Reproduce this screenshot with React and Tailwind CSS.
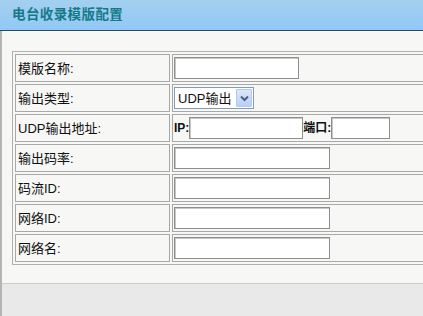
import React from "react";

const font = { fontFamily: '"Liberation Sans", "Noto Sans CJK SC", sans-serif' };

function Row({ label, children }) {
  return (
    <tr>
      <td className="w-[155px] h-[28px] border border-[#a8a8a8] pl-[2px] text-[13px] text-[#111] align-middle leading-none">
        {label}
      </td>
      <td className="h-[28px] border border-[#a8a8a8] pl-[1px] align-middle">{children}</td>
    </tr>
  );
}

function Input({ w }) {
  return (
    <div
      className={`${w} h-[22px] bg-white border border-[#8e8e8e] shadow-[inset_1px_1px_0_#c8c8c8]`}
    />
  );
}

export default function App() {
  return (
    <div className="w-[423px] h-[316px] overflow-hidden bg-[#f7f7f6] flex flex-col" style={font}>
      <div className="h-[31px] shrink-0 bg-gradient-to-b from-[#a3d0ee] to-[#92c8f8] border-b border-[#2a4d5a] flex items-center pl-[12px]">
        <span className="text-[13.5px] font-bold text-[#137a86] tracking-[0.4px] leading-none">电台收录模版配置</span>
      </div>
      <div className="flex-1 flex flex-col border-l-2 border-[#b4b4b4]">
        <div className="h-[252px] shrink-0 pt-[20px] pl-[10px]">
          <table className="w-[440px] border-separate border-spacing-[2px] border border-[#b0b0b0]">
            <tbody>
              <Row label="模版名称:">
                <Input w="w-[125px]" />
              </Row>
              <Row label="输出类型:">
                <div className="w-[80px] h-[22px] bg-white border border-[#7f9db9] flex items-center justify-between pl-[3px] pr-[1px]">
                  <span className="text-[13px] text-[#111] leading-none">UDP输出</span>
                  <span className="w-[16px] h-[18px] bg-gradient-to-b from-[#dbe7fb] to-[#b9cff5] border border-[#b4c8ef] flex items-center justify-center rounded-[1px]">
                    <svg width="9" height="7" viewBox="0 0 9 7">
                      <path d="M1 1.5 L4.5 5 L8 1.5" stroke="#4d6185" strokeWidth="2" fill="none" />
                    </svg>
                  </span>
                </div>
              </Row>
              <Row label="UDP输出地址:">
                <div className="flex items-center">
                  <span className="text-[12px] font-bold text-[#111] leading-none">IP:</span>
                  <Input w="w-[114px]" />
                  <span className="text-[12px] font-bold text-[#111] leading-none">端口:</span>
                  <Input w="w-[59px]" />
                </div>
              </Row>
              <Row label="输出码率:">
                <Input w="w-[156px]" />
              </Row>
              <Row label="码流ID:">
                <Input w="w-[156px]" />
              </Row>
              <Row label="网络ID:">
                <Input w="w-[156px]" />
              </Row>
              <Row label="网络名:">
                <Input w="w-[156px]" />
              </Row>
            </tbody>
          </table>
        </div>
        <div className="flex-1 bg-[#e9e9e9] border-t border-[#cdcdcd]" />
      </div>
    </div>
  );
}
